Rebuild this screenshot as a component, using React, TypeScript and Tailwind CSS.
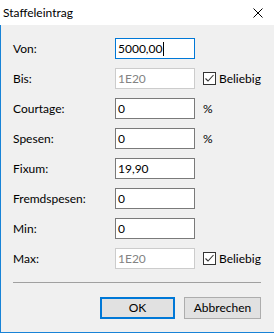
import React from "react";

const font = { fontFamily: '"Segoe UI", Lato, "Noto Sans", sans-serif' };

function Check() {
  return (
    <div className="flex items-center ml-2">
      <div className="w-[13px] h-[13px] border border-[#333333] bg-white flex items-center justify-center">
        <svg width="11" height="11" viewBox="0 0 11 11">
          <path d="M1.5 5.5 L4 8 L9.5 2" fill="none" stroke="#333333" strokeWidth="1.1" />
        </svg>
      </div>
      <span className="ml-[3px] text-[12px] text-black leading-none">Beliebig</span>
    </div>
  );
}

function Row({
  label,
  value,
  disabled,
  focused,
  extra,
}: {
  label: string;
  value: string;
  disabled?: boolean;
  focused?: boolean;
  extra?: React.ReactNode;
}) {
  const border = focused
    ? "border-[#0078d7]"
    : disabled
    ? "border-[#cccccc]"
    : "border-[#7a7a7a]";
  return (
    <div className="flex items-center h-[21px]">
      <div className="w-[102px] text-[12px] text-black leading-none">{label}</div>
      <div
        className={`w-[80px] h-[21px] border ${border} bg-white flex items-center pl-[2px] text-[12px] leading-none ${
          disabled ? "text-[#838383]" : "text-black"
        }`}
      >
        <span>{value}</span>
        {focused && <span className="w-px h-[14px] bg-black ml-px" />}
      </div>
      {extra}
    </div>
  );
}

export default function App() {
  return (
    <div className="w-[274px] h-[333px] flex flex-col bg-white" style={font}>
      <div className="h-[25px] flex items-center justify-between pl-[3px] pr-[11px] bg-white">
        <span className="text-[12px] text-black">Staffeleintrag</span>
        <svg width="10" height="10" viewBox="0 0 10 10">
          <path d="M0.5 0.5 L9.5 9.5 M9.5 0.5 L0.5 9.5" stroke="#000" strokeWidth="1" />
        </svg>
      </div>
      <div className="flex-1 bg-[#f0f0f0] border-l border-b border-[#1883d7] pl-[12px] pr-[13px] pt-[13px] flex flex-col">
        <div className="flex flex-col gap-[9px]">
          <Row label="Von:" value="5000,00" focused />
          <Row label="Bis:" value="1E20" disabled extra={<Check />} />
          <Row label="Courtage:" value="0" extra={<span className="ml-2 text-[12px]">%</span>} />
          <Row label="Spesen:" value="0" extra={<span className="ml-2 text-[12px]">%</span>} />
          <Row label="Fixum:" value="19,90" />
          <Row label="Fremdspesen:" value="0" />
          <Row label="Min:" value="0" />
          <Row label="Max:" value="1E20" disabled extra={<Check />} />
        </div>
        <div className="mt-[13px] h-px bg-[#a0a0a0]" />
        <div className="mt-[14px] flex justify-end gap-[9px]">
          <div className="w-[75px] h-[22px] border-2 border-[#0078d7] bg-[#e1e1e1] flex items-center justify-center text-[12px]">
            OK
          </div>
          <div className="w-[77px] h-[22px] border border-[#adadad] bg-[#e1e1e1] flex items-center justify-center text-[12px]">
            Abbrechen
          </div>
        </div>
      </div>
    </div>
  );
}
